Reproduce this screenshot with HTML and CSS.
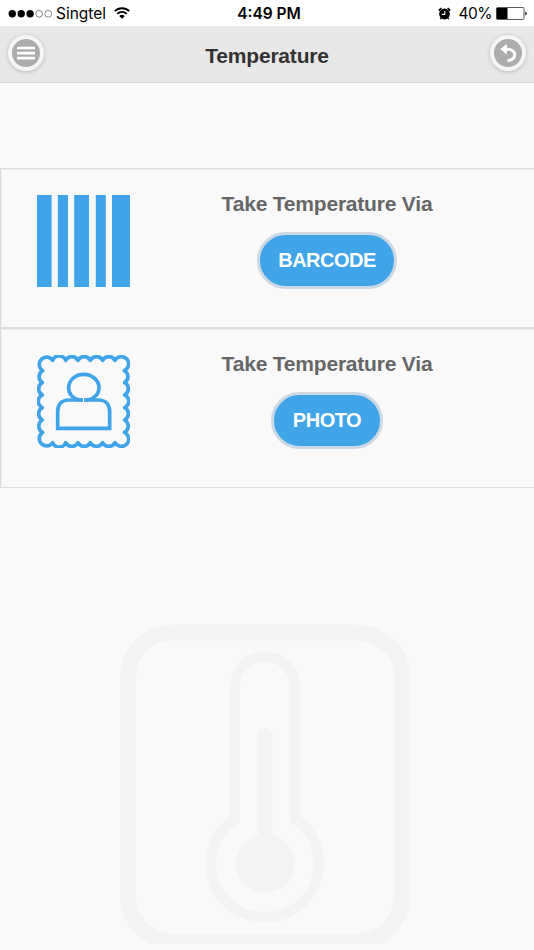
FILE: index.html
```html
<!DOCTYPE html>
<html lang="en">
<head>
    <meta charset="UTF-8">
    <meta name="viewport" content="width=device-width, initial-scale=1.0">
    <title>Temperature</title>
    <link rel="stylesheet" href="styles.css">
</head>
<body>
    <div class="status-bar">
        <div class="status-left">
            <svg class="signal" width="44" height="10" viewBox="0 0 44 10">
                <g fill="#000">
                    <circle cx="4.3" cy="4.8" r="3.7"/>
                    <circle cx="13.2" cy="4.8" r="3.7"/>
                    <circle cx="22.1" cy="4.8" r="3.7"/>
                </g>
                <g fill="none" stroke="#555" stroke-width="0.7">
                    <circle cx="31.2" cy="4.8" r="3.4"/>
                    <circle cx="40.2" cy="4.8" r="3.4"/>
                </g>
            </svg>
            <span class="carrier">Singtel</span>
            <svg class="wifi" width="16" height="12" viewBox="0 0 16 12">
                <g fill="none" stroke="#000" stroke-width="1.9">
                    <path d="M0.8 4.2A10.2 10.2 0 0 1 15.2 4.2"/>
                    <path d="M3.3 6.8A6.6 6.6 0 0 1 12.7 6.8"/>
                </g>
                <path d="M5.2 9A4 4 0 0 1 10.8 9L8 11.8Z"/>
            </svg>
        </div>
        <span class="time">4:49 PM</span>
        <div class="status-right">
            <svg class="alarm" width="13" height="13" viewBox="0 0 13 13">
                <circle cx="6.5" cy="7" r="5.4"/>
                <path d="M0.8 3.7L3.4 1.2M12.2 3.7L9.6 1.2" stroke="#000" stroke-width="1.7"/>
                <path d="M3.2 10.8L2.2 12.2M9.8 10.8L10.8 12.2" stroke="#000" stroke-width="1.3"/>
                <path d="M6.8 4V7.4H3.8" fill="none" stroke="#fff" stroke-width="1.1"/>
            </svg>
            <span class="percent">40%</span>
            <svg class="battery" width="31" height="13" viewBox="0 0 31 13">
                <rect x="0.5" y="0.5" width="27.5" height="12" rx="1" fill="#fff" stroke="#333" stroke-width="0.8"/>
                <rect x="0.7" y="1" width="10.8" height="11"/>
                <path d="M29.3 4.5Q30.7 5 30.7 6.5T29.3 8.5Z"/>
            </svg>
        </div>
    </div>

    <header class="header">
        <button class="round-btn" aria-label="Menu">
            <svg width="28" height="28" viewBox="0 0 28 28">
                <path d="M5 9H23M5 14.1H23M5 19.2H23" stroke="#fff" stroke-width="2.7"/>
            </svg>
        </button>
        <h1>Temperature</h1>
        <button class="round-btn" aria-label="Back">
            <svg width="28" height="28" viewBox="0 0 28 28">
                <path d="M6.2 10L12.8 5V15.4Z" fill="#fff"/>
                <path d="M10 10.2H12.5C22.5 10.2 24 19.5 13.5 21.9" fill="none" stroke="#fff" stroke-width="3"/>
            </svg>
        </button>
    </header>

    <main class="content">
        <section class="option">
            <svg class="option-icon" width="93" height="92" viewBox="0 0 93 92">
                <g fill="#3fa5e8">
                    <rect x="0" y="0" width="14.6" height="92"/>
                    <rect x="20.8" y="0" width="10.2" height="92"/>
                    <rect x="37.2" y="0" width="14.8" height="92"/>
                    <rect x="58.8" y="0" width="10" height="92"/>
                    <rect x="75" y="0" width="18" height="92"/>
                </g>
            </svg>
            <div class="option-body">
                <h2>Take Temperature Via</h2>
                <button class="btn">BARCODE</button>
            </div>
        </section>
        <section class="option">
            <svg class="option-icon" width="93" height="93" viewBox="111 135 279 279">
                <g fill="none" stroke="#3fa5e8" stroke-width="11" stroke-linejoin="round">
                    <path d="M158 151A22 22 0 1 0 128 182A21 21 0 0 0 127 218A21 21 0 0 0 127 255A21 21 0 0 0 127 293A21 21 0 0 0 127 330A21 21 0 0 0 128 367A22 22 0 1 0 158 398A21 21 0 0 0 197 398A21 21 0 0 0 234 398A21 21 0 0 0 271 398A21 21 0 0 0 308 398A21 21 0 0 0 345 398A22 22 0 1 0 373 367A21 21 0 0 0 374 330A21 21 0 0 0 374 293A21 21 0 0 0 374 255A21 21 0 0 0 374 218A21 21 0 0 0 373 182A22 22 0 1 0 345 151A21 21 0 0 0 308 151A21 21 0 0 0 271 151A21 21 0 0 0 234 151A21 21 0 0 0 197 151A21 21 0 0 0 158 151Z"/>
                    <path d="M249 270H238C218 265 206 251 206 233C206 211 226 193 251 193S297 211 297 233C297 251 284 265 264 270H253" stroke-linejoin="miter"/>
                    <path d="M249 270H206C186 270 173 283 173 305V355H329V305C329 283 316 270 296 270H253" stroke-linejoin="miter"/>
                </g>
            </svg>
            <div class="option-body">
                <h2>Take Temperature Via</h2>
                <button class="btn">PHOTO</button>
            </div>
        </section>

        <svg class="watermark" width="290" height="320" viewBox="0 0 290 320">
            <g fill="none" stroke="#f3f3f3">
                <rect x="8" y="8.5" width="274.2" height="309" rx="45" stroke-width="15.5"/>
                <path d="M114.8 194.7V62.7A30.2 30.2 0 0 1 175.2 62.7V194.7A54 54 0 1 1 114.8 194.7Z" stroke-width="10.3"/>
            </g>
            <g fill="#f3f3f3">
                <rect x="137.7" y="104" width="14.6" height="120" rx="6.5"/>
                <circle cx="145" cy="239.5" r="29.2"/>
            </g>
        </svg>
    </main>
</body>
</html>
```

FILE: styles.css
```css
* {
    margin: 0;
    padding: 0;
    box-sizing: border-box;
}

body {
    height: 950px;
    background-color: #f9f9f9;
    font-family: "Liberation Sans", Arial, sans-serif;
    overflow: hidden;
}

.status-bar {
    display: grid;
    grid-template-columns: 1fr auto 1fr;
    align-items: center;
    height: 26px;
    padding: 1px 7px 0 8px;
    background-color: #fff;
    color: #000;
    font-family: Inter, sans-serif;
    font-size: 15.5px;
    line-height: 24px;
}

.status-left,
.status-right {
    display: flex;
    align-items: center;
}

.status-right {
    justify-content: flex-end;
}

.carrier {
    margin-left: 4px;
}

.wifi {
    margin: 0 0 2px 8px;
}

.time {
    padding-left: 3px;
    font-weight: 600;
}

.alarm {
    margin-bottom: 1px;
}

.percent {
    margin: 0 4px 0 7px;
    letter-spacing: -0.5px;
}

.header {
    display: flex;
    justify-content: space-between;
    align-items: flex-start;
    height: 57px;
    padding: 9px 8px 0;
    background-color: #e8e8e8;
    border-bottom: 1px solid #dadada;
}

.header h1 {
    color: #333;
    font-size: 21px;
    line-height: 24px;
    letter-spacing: -0.2px;
    padding-top: 9px;
}

.round-btn {
    width: 36px;
    height: 36px;
    border: 4px solid #f6f6f6;
    border-radius: 50%;
    background-color: #acacac;
    box-shadow: 0 1px 4px rgba(0, 0, 0, 0.2);
}

.round-btn svg {
    display: block;
}

.content {
    padding-top: 85px;
}

.option {
    display: flex;
    height: 160px;
    padding: 26px 0 0 36px;
    border: 1px solid #dcdcdc;
    border-right: none;
    box-shadow: inset 1px 1px 0 #ededed;
}

.option-icon {
    flex: none;
}

.option-body {
    width: 394px;
    text-align: center;
}

.option-body h2 {
    color: #666;
    font-size: 21px;
    line-height: 24px;
    letter-spacing: -0.2px;
    margin: -3px 0 16px;
}

.btn {
    height: 57px;
    padding: 0 18.5px;
    border: 3px solid #ccd9e5;
    border-radius: 29px;
    background-color: #3fa5e8;
    color: #fff;
    font-family: inherit;
    font-size: 20px;
    font-weight: bold;
    letter-spacing: -0.5px;
}

.watermark {
    display: block;
    margin: 136px 0 0 120px;
}
```
